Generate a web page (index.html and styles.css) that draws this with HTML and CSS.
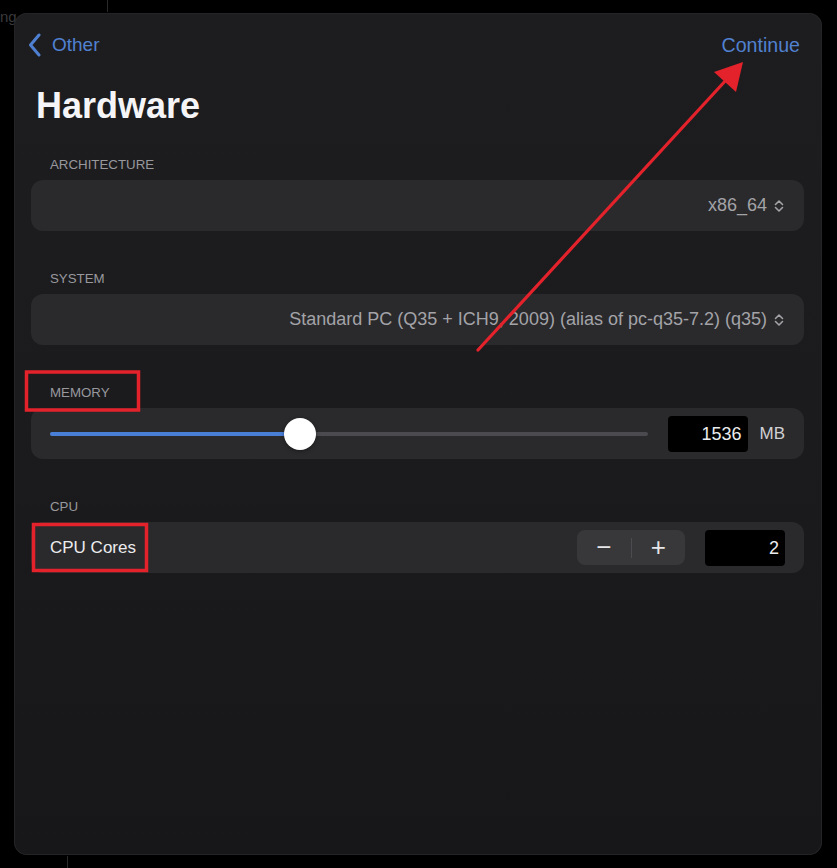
FILE: index.html
```html
<!DOCTYPE html>
<html>
<head>
    <title>Hardware</title>
    <link rel="stylesheet" href="styles.css">
</head>
<body>
    <div class="backdrop-text">ng</div>
    <div class="backdrop-line line-top"></div>
    <div class="backdrop-line line-bottom"></div>

    <div id="sheet">
        <div class="nav">
            <a class="nav-back">
                <svg width="14" height="24" viewBox="0 0 14 24">
                    <path d="M11 2 L2.5 12 L11 22" fill="none" stroke="#4f7fd0" stroke-width="3" stroke-linecap="round" stroke-linejoin="round"/>
                </svg>
                <span>Other</span>
            </a>
            <a class="nav-next">Continue</a>
        </div>

        <h1 class="title">Hardware</h1>

        <div class="section">
            <div class="section-label">ARCHITECTURE</div>
            <div class="row row-picker">
                <span class="picker-value">x86_64</span>
                <svg class="updown" width="12" height="14" viewBox="0 0 12 14">
                    <path d="M2.5 5.5 L6 2 L9.5 5.5 M2.5 8.5 L6 12 L9.5 8.5" fill="none" stroke="#a3a3a8" stroke-width="1.6" stroke-linecap="round" stroke-linejoin="round"/>
                </svg>
            </div>
        </div>

        <div class="section">
            <div class="section-label">SYSTEM</div>
            <div class="row row-picker">
                <span class="picker-value">Standard PC (Q35 + ICH9, 2009) (alias of pc-q35-7.2) (q35)</span>
                <svg class="updown" width="12" height="14" viewBox="0 0 12 14">
                    <path d="M2.5 5.5 L6 2 L9.5 5.5 M2.5 8.5 L6 12 L9.5 8.5" fill="none" stroke="#a3a3a8" stroke-width="1.6" stroke-linecap="round" stroke-linejoin="round"/>
                </svg>
            </div>
        </div>

        <div class="section">
            <div class="section-label">MEMORY</div>
            <div class="row row-slider">
                <div class="slider">
                    <div class="slider-fill" style="width: 41.9%"></div>
                    <div class="slider-thumb" style="left: 41.9%"></div>
                </div>
                <div class="num-field">1536</div>
                <span class="unit">MB</span>
            </div>
        </div>

        <div class="section">
            <div class="section-label">CPU</div>
            <div class="row row-stepper">
                <span class="row-title">CPU Cores</span>
                <div class="stepper">
                    <span class="step-btn">&minus;</span>
                    <span class="step-divider"></span>
                    <span class="step-btn">+</span>
                </div>
                <div class="num-field">2</div>
            </div>
        </div>
    </div>

    <svg class="annotations" width="837" height="868" viewBox="0 0 837 868">
        <rect x="26.5" y="372" width="112" height="38" fill="none" stroke="#e3222b" stroke-width="3.5"/>
        <rect x="33.5" y="524.5" width="113" height="46" fill="none" stroke="#e3222b" stroke-width="3.5"/>
        <line x1="478" y1="350" x2="727" y2="79" stroke="#e3222b" stroke-width="3.2" stroke-linecap="round"/>
        <polygon points="743,62 736,92 714,72" fill="#e3222b"/>
    </svg>
</body>
</html>
```

FILE: styles.css
```css
body {
    margin: 0;
    width: 837px;
    height: 868px;
    overflow: hidden;
    position: relative;
    background: #000;
    font-family: "Liberation Sans", Arial, sans-serif;
}

.backdrop-text {
    position: absolute;
    left: 0;
    top: 8px;
    font-size: 15px;
    color: #3a3a3c;
}

.backdrop-line {
    position: absolute;
    width: 1px;
    background: #2a2a2c;
}

.line-top {
    left: 107px;
    top: 0;
    height: 12px;
}

.line-bottom {
    left: 67px;
    top: 856px;
    height: 12px;
}

#sheet {
    position: relative;
    margin: 13px 0 0 14px;
    width: 808px;
    height: 842px;
    box-sizing: border-box;
    padding: 20px 18px 0 17px;
    border-radius: 13px;
    background: linear-gradient(180deg, #1d1d1f 0%, #1b1b1d 50%, #171719 100%);
    box-shadow: inset 0 0 0 1px #242426;
}

.nav {
    display: flex;
    justify-content: space-between;
    align-items: center;
    height: 24px;
    margin: 0 4px 0 -3px;
}

.nav a {
    display: flex;
    align-items: center;
    color: #5181d0;
    font-size: 19px;
    cursor: pointer;
}

.nav-next {
    font-size: 19.6px !important;
}

.nav-back svg {
    margin-right: 10px;
}

.title {
    margin: 27px 0 0 5px;
    font-size: 36px;
    line-height: 44px;
    font-weight: bold;
    color: #f5f5f7;
}

.section {
    margin-top: 29px;
}

.section + .section {
    margin-top: 40px;
}

.section-label {
    padding-left: 19px;
    font-size: 13.3px;
    line-height: 16px;
    color: #98989d;
    margin-bottom: 7px;
}

.row {
    display: flex;
    align-items: center;
    height: 51px;
    box-sizing: border-box;
    padding: 0 19px;
    border-radius: 12px;
    background: #2a2a2c;
}

.row-picker {
    justify-content: flex-end;
}

.picker-value {
    font-size: 18px;
    color: #a3a3a8;
}

.updown {
    margin-left: 6px;
}

.slider {
    position: relative;
    flex: 1;
    height: 4px;
    border-radius: 2px;
    background: #4b4b4f;
    margin-right: 20px;
}

.slider-fill {
    height: 100%;
    border-radius: 2px;
    background: #4a7fd8;
}

.slider-thumb {
    position: absolute;
    top: 50%;
    width: 32px;
    height: 32px;
    margin: -16px 0 0 -16px;
    border-radius: 50%;
    background: #fff;
    box-shadow: 0 1px 4px rgba(0, 0, 0, 0.4);
}

.num-field {
    width: 80px;
    height: 36px;
    box-sizing: border-box;
    padding-right: 6px;
    border-radius: 4px;
    background: #000;
    color: #ececee;
    font-size: 18px;
    line-height: 36px;
    text-align: right;
}

.unit {
    margin-left: 12px;
    font-size: 17px;
    color: #d0d0d4;
}

.row-title {
    flex: 1;
    font-size: 17px;
    color: #ececee;
}

.stepper {
    display: flex;
    align-items: center;
    width: 108px;
    height: 35px;
    border-radius: 8px;
    background: #38383b;
    margin-right: 20px;
}

.step-btn {
    flex: 1;
    text-align: center;
    font-size: 26px;
    line-height: 35px;
    color: #e6e6e8;
}

.step-divider {
    width: 1px;
    height: 20px;
    background: #4c4c50;
}

.annotations {
    position: absolute;
    left: 0;
    top: 0;
    pointer-events: none;
}
```
